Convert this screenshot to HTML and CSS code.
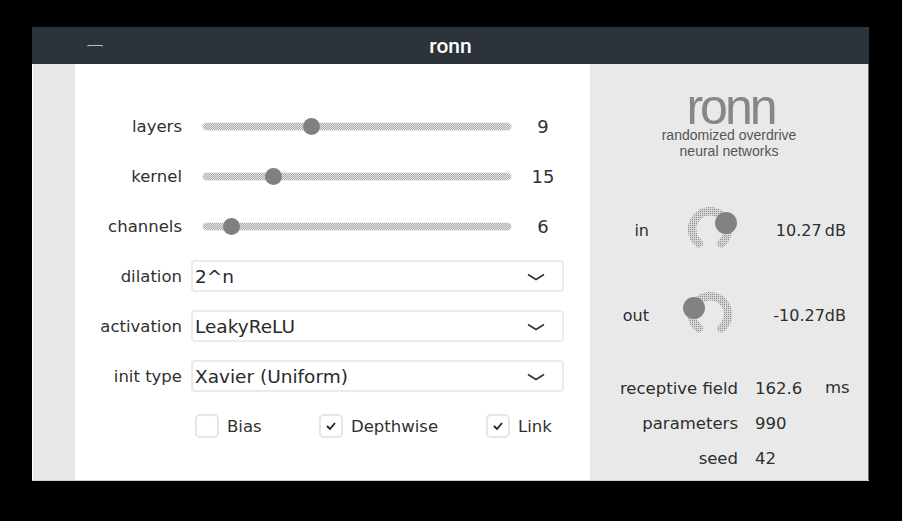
FILE: index.html
```html
<!DOCTYPE html>
<html>
<head>
<meta charset="utf-8">
<link rel="stylesheet" href="styles.css">
</head>
<body>
<div class="window">
  <div class="titlebar">
    <svg class="min" width="16" height="5" viewBox="0 0 16 5"><path d="M1 2.5H15M1 2V3.5M15 2V3.5" stroke="#b8bcc0" stroke-width="1" fill="none"/></svg>
    <span class="title">ronn</span>
  </div>
  <div class="content">
    <div class="strip"></div>
    <div class="main">
      <div class="label">layers</div>
      <div class="slider"><div class="track"><div class="thumb" style="left:108px"></div></div><div class="value">9</div></div>

      <div class="label">kernel</div>
      <div class="slider"><div class="track"><div class="thumb" style="left:70px"></div></div><div class="value">15</div></div>

      <div class="label">channels</div>
      <div class="slider"><div class="track"><div class="thumb" style="left:28px"></div></div><div class="value">6</div></div>

      <div class="label">dilation</div>
      <div class="select"><span>2^n</span><svg width="20" height="10" viewBox="0 0 20 10"><path d="M2 2.5L10 7.5L18 2.5" stroke="#333" stroke-width="1.6" fill="none"/></svg></div>

      <div class="label">activation</div>
      <div class="select"><span>LeakyReLU</span><svg width="20" height="10" viewBox="0 0 20 10"><path d="M2 2.5L10 7.5L18 2.5" stroke="#333" stroke-width="1.6" fill="none"/></svg></div>

      <div class="label">init type</div>
      <div class="select"><span>Xavier (Uniform)</span><svg width="20" height="10" viewBox="0 0 20 10"><path d="M2 2.5L10 7.5L18 2.5" stroke="#333" stroke-width="1.6" fill="none"/></svg></div>

      <div class="label"></div>
      <div class="checks">
        <div class="check c1"><span class="box"></span><span>Bias</span></div>
        <div class="check c2"><span class="box"><svg width="12" height="10" viewBox="0 0 12 10"><path d="M2 5L5 8L10 2" stroke="#222" stroke-width="1.8" fill="none"/></svg></span><span>Depthwise</span></div>
        <div class="check c3"><span class="box"><svg width="12" height="10" viewBox="0 0 12 10"><path d="M2 5L5 8L10 2" stroke="#222" stroke-width="1.8" fill="none"/></svg></span><span>Link</span></div>
      </div>
    </div>
    <div class="side">
      <div class="logo">ronn</div>
      <div class="sub">randomized overdrive<br>neural networks</div>
      <div class="knobs">
        <div class="klabel">in</div>
        <svg class="knob" width="60" height="60" viewBox="0 0 60 60">
          <defs><pattern id="dots" width="2" height="2" patternUnits="userSpaceOnUse"><rect width="2" height="2" fill="#d6d6d6"/><rect width="1" height="1" fill="#8e8e8e"/></pattern></defs>
          <path d="M18.9 44.4A18 18 0 1 1 41.1 44.4" stroke="url(#dots)" stroke-width="8.5" fill="none" stroke-linecap="round"/>
          <circle cx="46" cy="24" r="11" fill="#828282"/>
        </svg>
        <div class="kval">10.27&#8201;dB</div>

        <div class="klabel">out</div>
        <svg class="knob" width="60" height="60" viewBox="0 0 60 60">
          <path d="M18.9 44.4A18 18 0 1 1 41.1 44.4" stroke="url(#dots)" stroke-width="8.5" fill="none" stroke-linecap="round"/>
          <circle cx="14" cy="24" r="11" fill="#828282"/>
        </svg>
        <div class="kval">-10.27dB</div>
      </div>
      <div class="info">
        <div class="ilabel">receptive field</div><div class="ival">162.6</div><div class="iunit">ms</div>
        <div class="ilabel">parameters</div><div class="ival">990</div><div class="iunit"></div>
        <div class="ilabel">seed</div><div class="ival">42</div><div class="iunit"></div>
      </div>
    </div>
  </div>
</div>
</body>
</html>
```

FILE: styles.css
```css
html, body {
  margin: 0;
  padding: 0;
  background: #000;
}
body {
  width: 902px;
  height: 521px;
  overflow: hidden;
  font-family: "DejaVu Sans", sans-serif;
  color: #2e2e2e;
}
.window {
  margin: 27px 0 0 32px;
  width: 837px;
  height: 454px;
  display: flex;
  flex-direction: column;
  background: #2b3239;
}
.titlebar {
  height: 37px;
  flex: none;
  position: relative;
  display: flex;
  align-items: center;
  justify-content: center;
  background: #2b3239;
}
.titlebar .min {
  position: absolute;
  left: 55px;
  top: 16px;
}
.title {
  font-family: Roboto, sans-serif;
  font-weight: 500;
  font-size: 21px;
  color: #fff;
  line-height: 1;
  margin-top: 1px;
}
.content {
  flex: 1;
  display: flex;
  border-left: 1px solid #fff;
  border-bottom: 1px solid #cfcfcf;
}
.strip {
  width: 42px;
  flex: none;
  background: #e7e7e7;
}
.main {
  width: 515px;
  flex: none;
  background: #fff;
  display: grid;
  grid-template-columns: 107px 373px;
  grid-auto-rows: 50px;
  column-gap: 9px;
  padding-top: 37px;
  box-sizing: border-box;
  align-content: start;
}
.label {
  text-align: right;
  font-size: 16.5px;
  align-self: center;
  color: #303030;
}
.slider {
  display: flex;
  align-items: center;
}
.track {
  flex: none;
  margin-left: 12px;
  width: 308px;
  height: 7px;
  border-radius: 4px;
  position: relative;
  box-shadow: 0 0 0 1px #ececec;
  background: repeating-conic-gradient(#adadad 0 25%, #e4e4e4 0 50%) 0 0 / 2px 2px;
}
.thumb {
  position: absolute;
  top: 50%;
  width: 17px;
  height: 17px;
  margin: -8.5px 0 0 -8.5px;
  border-radius: 50%;
  background: #808080;
}
.value {
  flex: none;
  width: 64px;
  text-align: center;
  font-size: 18px;
  color: #303030;
}
.select {
  align-self: center;
  height: 32px;
  box-sizing: border-box;
  border: 2px solid #ebebeb;
  border-radius: 4px;
  display: flex;
  align-items: center;
  justify-content: space-between;
  padding: 0 16px 0 2px;
  font-size: 18.5px;
  color: #2a2a2a;
}
.select svg {
  margin-top: 1px;
}
.checks {
  display: flex;
  align-items: center;
  font-size: 16.5px;
  color: #303030;
}
.check {
  display: flex;
  align-items: center;
  gap: 8px;
}
.c1 { width: 124px; margin-left: 4px; }
.c2 { width: 167px; }
.box {
  width: 24px;
  height: 24px;
  box-sizing: border-box;
  border: 2px solid #e6e6e6;
  border-radius: 5px;
  display: flex;
  align-items: center;
  justify-content: center;
}
.side {
  width: 278px;
  flex: none;
  background: #e9e9e9;
  border-right: 1px solid #6a6a6a;
  display: flex;
  flex-direction: column;
  align-items: stretch;
}
.logo {
  margin-top: 24px;
  font-family: "Liberation Sans", Arial, sans-serif;
  font-size: 50px;
  line-height: 39px;
  letter-spacing: -3px;
  text-indent: 3px;
  color: #878787;
  text-align: center;
}
.sub {
  font-family: "Liberation Sans", Arial, sans-serif;
  font-size: 14px;
  line-height: 16px;
  color: #555;
  text-align: center;
}
.knobs {
  margin-top: 40px;
  display: grid;
  grid-template-columns: 59px 31px 60px 106px;
  grid-auto-rows: 60px;
  row-gap: 25px;
  align-items: center;
  font-size: 16px;
  color: #2e2e2e;
}
.klabel {
  grid-column: 1;
  text-align: right;
  margin-top: 3px;
}
.knob {
  grid-column: 3;
}
.kval {
  grid-column: 4;
  text-align: right;
  margin-top: 3px;
}
.info {
  margin-top: 27px;
  display: grid;
  grid-template-columns: 148px 70px 40px;
  grid-auto-rows: 35px;
  align-items: center;
  font-size: 16.5px;
  color: #2e2e2e;
}
.ilabel {
  text-align: right;
}
.ival {
  padding-left: 17px;
}
.iunit {
  padding-left: 17px;
  margin-top: -2px;
}
```
